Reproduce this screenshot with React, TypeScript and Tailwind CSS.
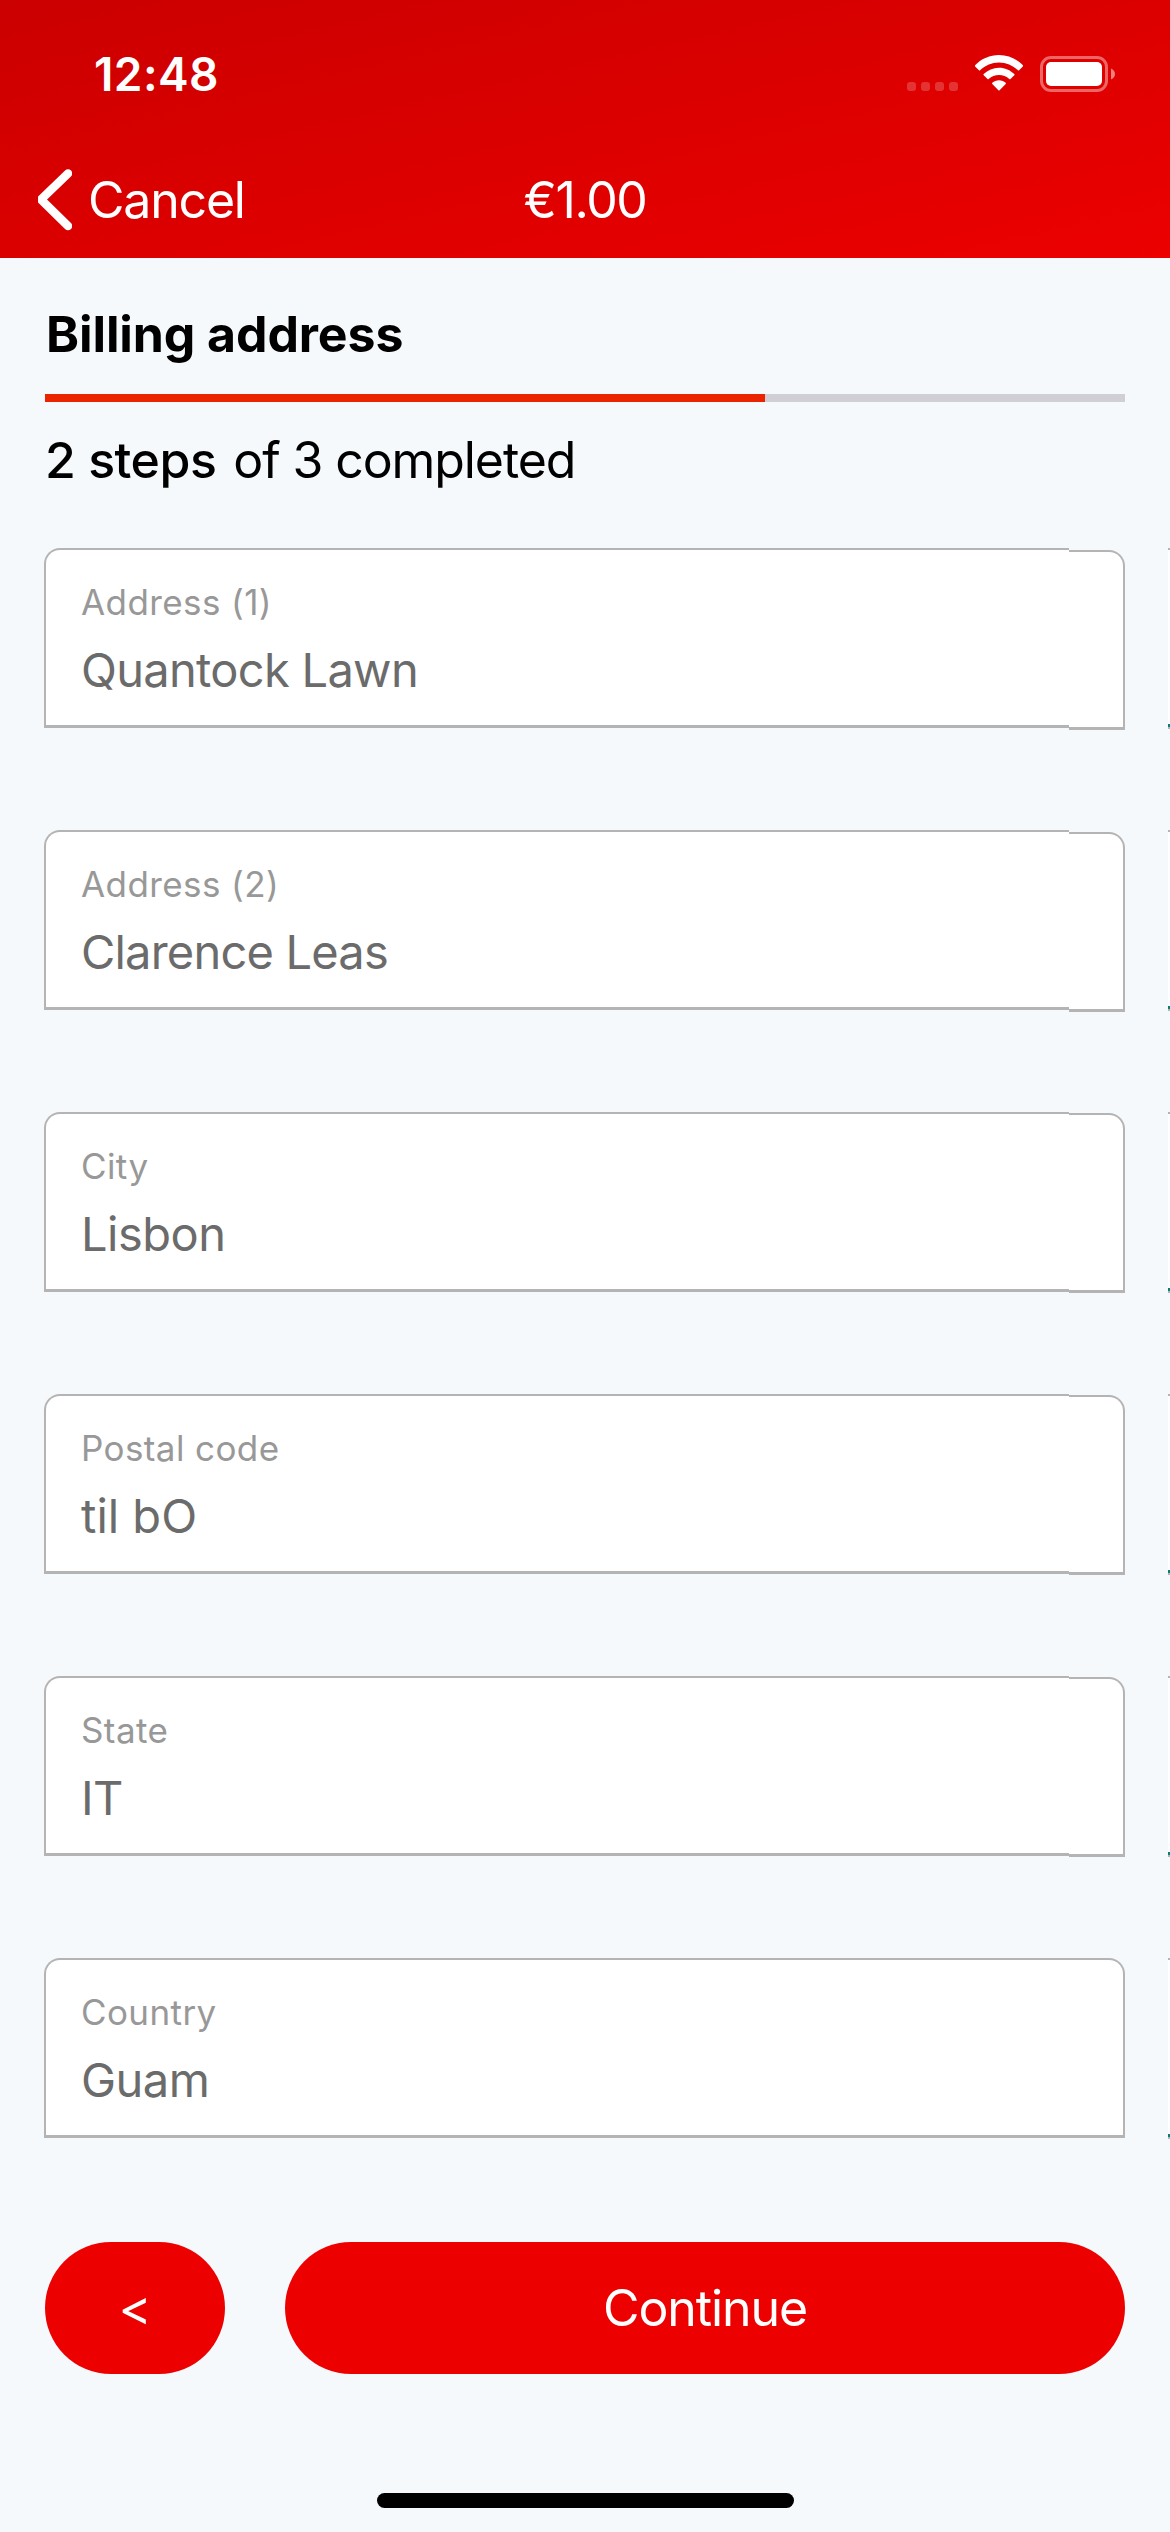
import React from "react";

type Field = { label: string; value: string; valueFit: string; capOffset: string };

// capOffset nudges the right-hand end cap of each outline onto its pixel row.
const fields: Field[] = [
  { label: "Address (1)", value: "Quantock Lawn", valueFit: "tracking-[-0.7px]", capOffset: "mt-[2px]" },
  { label: "Address (2)", value: "Clarence Leas", valueFit: "tracking-[-0.8px]", capOffset: "mt-[2px]" },
  { label: "City", value: "Lisbon", valueFit: "tracking-[-0.5px]", capOffset: "mt-px" },
  { label: "Postal code", value: "til bO", valueFit: "tracking-[0px]", capOffset: "mt-px" },
  { label: "State", value: "IT", valueFit: "tracking-[-0.5px]", capOffset: "mt-px" },
  { label: "Country", value: "Guam", valueFit: "tracking-[-0.5px]", capOffset: "mt-0" },
];

function StatusBar() {
  return (
    <div className="flex h-[146px] items-center justify-between pl-[94px] pr-[54px]">
      <span className="mt-[2px] text-[46px] font-semibold leading-none tracking-[0.4px]">12:48</span>
      <div className="flex items-center">
        <div className="mr-[17px] mt-[27px] flex gap-[5px]">
          {[0, 1, 2, 3].map((i) => (
            <span key={i} className="h-[9px] w-[9px] rounded-[3px] bg-white/20" />
          ))}
        </div>
        <svg width="48" height="36" viewBox="0 0 48 36" className="mr-[17px] block" fill="#fff">
          <path d="M24 0C33 0 41.500 3.600 48 10.300Q48.400 10.900 47.900 11.400L44.100 15.200Q43.500 15.700 42.900 15.200C37.700 10.200 31.200 7.400 24 7.400S10.300 10.200 5.100 15.200Q4.500 15.700 3.900 15.200L0.100 11.400Q-0.400 10.900 0.100 10.300C6.500 3.600 15 0 24 0Z" />
          <path d="M24 12.700C29.900 12.700 35.200 15 39.300 19Q39.900 19.600 39.300 20.200L35.500 24Q34.900 24.500 34.300 24C31.500 21.400 28 20 24 20S16.500 21.400 13.700 24Q13.100 24.500 12.500 24L8.700 20.200Q8.100 19.600 8.700 19C12.800 15 18.100 12.700 24 12.700Z" />
          <path d="M24 25.300C26.500 25.300 28.900 26.200 30.700 27.700Q31.300 28.300 30.700 28.900L24.600 35.200Q24 35.800 23.400 35.200L17.300 28.900Q16.700 28.300 17.300 27.700C19.100 26.200 21.500 25.300 24 25.300Z" />
        </svg>
        <svg width="76" height="36" viewBox="0 0 76 36" className="mt-[2px] block">
          <rect x="1.500" y="1.500" width="65" height="33" rx="9.500" fill="none" stroke="#fff" strokeOpacity="0.4" strokeWidth="3" />
          <rect x="6" y="6" width="56" height="24" rx="5" fill="#fff" />
          <path d="M71 12.500C73.500 13.500 75 15.500 75 18S73.500 22.500 71 23.500Z" fill="#fff" fillOpacity="0.5" />
        </svg>
      </div>
    </div>
  );
}

function NavBar() {
  return (
    <div className="grid h-[112px] grid-cols-3 items-center pb-[4px]">
      <button className="flex items-center pl-[35px] text-left">
        <svg width="37" height="62" viewBox="0 0 37 62" className="mr-[16px] block" fill="none">
          <path d="M33 4.500L6 30.500L33 57" stroke="#fff" strokeWidth="8.500" strokeLinecap="round" strokeLinejoin="bevel" />
        </svg>
        <span className="text-[50px] font-normal leading-[60px] tracking-[-1.2px]">Cancel</span>
      </button>
      <span className="text-center text-[50px] font-normal leading-[60px] tracking-[-1.4px]">€1.00</span>
    </div>
  );
}

function AddressField({ label, value, valueFit, capOffset }: Field) {
  return (
    <div className="flex h-[182px] w-[1081px]">
      <div className="h-[180px] w-[1025px] rounded-tl-[16px] border-b-[3px] border-l-2 border-t-2 border-[#b4b4b4] bg-white pl-[35px] pt-[30px]">
        <div className="text-[35px] leading-[44px] tracking-[0.4px] text-[#989898]">{label}</div>
        <div className={"mt-[16px] text-[47px] leading-[60px] text-[#6b6b6b] " + valueFit}>{value}</div>
      </div>
      <div className={"h-[180px] w-[56px] rounded-tr-[16px] border-b-[3px] border-r-2 border-t-2 border-[#b4b4b4] bg-white " + capOffset} />
      <div className="relative">
        <div className="absolute left-[43px] top-0 h-[181px] w-[2px] border-b-2 border-t-2 border-[#b4b4b4] bg-white">
          <div className="absolute bottom-0 h-[3px] w-full bg-[#00807f]" />
        </div>
      </div>
    </div>
  );
}

export default function App() {
  return (
    <div className="flex h-[2532px] w-[1170px] flex-col overflow-hidden bg-[#f5f9fc] font-['Inter',sans-serif] text-black">
      <header className="h-[258px] shrink-0 bg-[linear-gradient(167deg,#cb0000,#ec0000)] text-white">
        <StatusBar />
        <NavBar />
      </header>
      <main className="flex flex-col pt-[46px]">
        <h1 className="pl-[46px] text-[50px] font-bold leading-[60px] tracking-[-0.1px]">Billing address</h1>
        <div className="ml-[45px] mt-[30px] h-[8px] w-[1080px] bg-[#d1cfd6]">
          <div className="h-full w-2/3 bg-[#eb2400]" />
        </div>
        <p className="mt-[28px] pl-[45px] text-[50px] font-normal leading-[60px] tracking-[-1.1px]">
          <span className="mr-[4px] font-medium tracking-[-0.5px]">2 steps</span> of 3 completed
        </p>
        <div className="ml-[44px] mt-[58px] flex flex-col gap-[100px]">
          {fields.map((f) => (
            <AddressField key={f.label} {...f} />
          ))}
        </div>
        <div className="mx-[45px] mt-[102px] flex h-[132px] gap-[60px]">
          <button className="w-[180px] rounded-full bg-[#ed0000] pb-[2px] text-[50px] font-normal text-white">&lt;</button>
          <button className="flex-1 rounded-full bg-[#ed0000] text-[50px] font-normal tracking-[-1.1px] text-white">Continue</button>
        </div>
      </main>
      <div className="mx-auto mb-[24px] mt-auto h-[15px] w-[417px] rounded-full bg-black" />
    </div>
  );
}
